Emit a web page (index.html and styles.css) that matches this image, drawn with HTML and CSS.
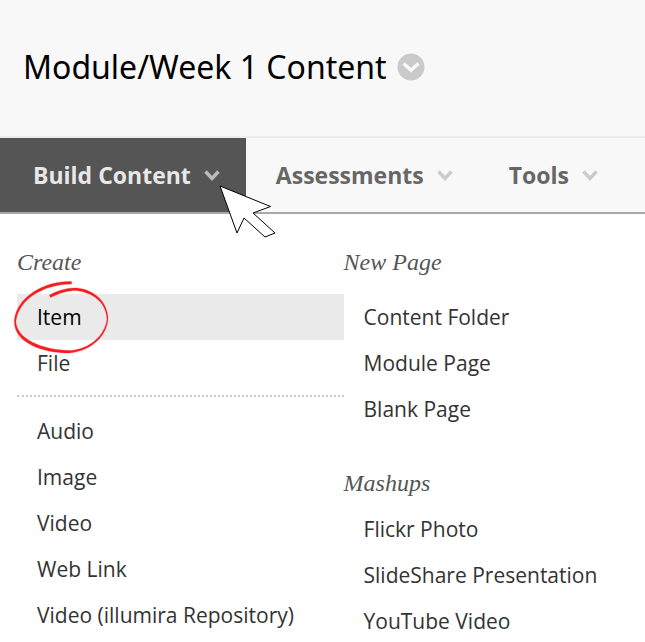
FILE: index.html
```html
<!DOCTYPE html>
<html lang="en">
<head>
  <meta charset="UTF-8">
  <meta name="viewport" content="width=device-width, initial-scale=1.0">
  <title>Module/Week 1 Content</title>
  <link rel="stylesheet" href="styles.css">
</head>
<body>
  <header class="page-header">
    <h1>Module/Week 1 Content</h1>
    <button type="button" class="title-menu" aria-label="Page options">
      <svg width="28" height="28" viewBox="0 0 28 28">
        <circle cx="14" cy="14" r="13.5" fill="#cacaca"/>
        <path d="M6.5 10.5l7.5 6.5 7.5-6.5" fill="none" stroke="#f8f8f8" stroke-width="3.6"/>
      </svg>
    </button>
  </header>

  <nav class="action-bar">
    <button type="button" class="tab active">Build Content
      <svg class="chevron" width="16" height="12" viewBox="0 0 16 12"><path d="M1.5 2.5l6.5 7 6.5-7"/></svg>
      <!-- mouse pointer -->
      <svg class="pointer" width="58" height="54" viewBox="0 0 58 54">
        <path d="M1 1l50.5 20.5L34 28l22 20-10 4-21-19-7 15z" fill="#fff" stroke="#000" stroke-width="1"/>
      </svg>
    </button>
    <button type="button" class="tab">Assessments
      <svg class="chevron" width="16" height="12" viewBox="0 0 16 12"><path d="M1.5 2.5l6.5 7 6.5-7"/></svg>
    </button>
    <button type="button" class="tab">Tools
      <svg class="chevron" width="16" height="12" viewBox="0 0 16 12"><path d="M1.5 2.5l6.5 7 6.5-7"/></svg>
    </button>
  </nav>

  <main class="menu">
    <div class="column">
      <h2>Create</h2>
      <ul>
        <li class="selected">
          <a href="#">Item</a>
          <!-- hand drawn circle -->
          <svg class="circle" width="96" height="74" viewBox="0 0 96 74">
            <path d="M57.500 .5C33-.5 4 14 .5 38C-2 61 28 72 55 72C78 70 94 54 94 36C92 17 76 7 60 7C52 7 43 10 35.500 14L36.500 16.500C47 11.500 54 9.500 62 9.500C79 11.500 92 21 93 38C91 55 75 68.500 56 69.500C28 69 2 58 2 40C5 18 29 3.500 57.500 3z" fill="#f81c1f" stroke="#f81c1f" stroke-width=".3"/>
          </svg>
        </li>
        <li><a href="#">File</a></li>
      </ul>
      <hr>
      <ul>
        <li><a href="#">Audio</a></li>
        <li><a href="#">Image</a></li>
        <li><a href="#">Video</a></li>
        <li><a href="#">Web Link</a></li>
        <li><a href="#">Video (illumira Repository)</a></li>
      </ul>
    </div>
    <div class="column">
      <h2>New Page</h2>
      <ul>
        <li><a href="#">Content Folder</a></li>
        <li><a href="#">Module Page</a></li>
        <li><a href="#">Blank Page</a></li>
      </ul>
      <h2 class="second">Mashups</h2>
      <ul>
        <li><a href="#">Flickr Photo</a></li>
        <li><a href="#">SlideShare Presentation</a></li>
        <li><a href="#">YouTube Video</a></li>
      </ul>
    </div>
  </main>
</body>
</html>
```
FILE: styles.css
```css
* {
  margin: 0;
  padding: 0;
  box-sizing: border-box;
}

body {
  font-family: "Open Sans", sans-serif;
  font-size: 21px;
  color: #333;
  background: #fff;
  overflow-x: hidden;
}

button {
  font: inherit;
  border: none;
  background: none;
  cursor: pointer;
}

.page-header {
  display: flex;
  align-items: center;
  gap: 10px;
  padding: 43px 23px 45px;
  background: #f8f8f8;
}

.page-header h1 {
  font-family: "Noto Sans", sans-serif;
  font-size: 32px;
  line-height: 48px;
  font-weight: 400;
  color: #000;
}

.title-menu,
.title-menu svg {
  display: block;
}

.action-bar {
  display: flex;
  background: #f8f8f8;
  border-top: 2px solid #ececec;
  border-bottom: 2px solid #a8a8a8;
}

.tab {
  position: relative;
  display: flex;
  align-items: center;
  gap: 13px;
  height: 74px;
  padding: 0 26px 0 30px;
  font-size: 23px;
  font-weight: 700;
  color: #666;
  white-space: nowrap;
}

.tab.active {
  padding-left: 33px;
  background: #555;
  color: #e8e8e8;
}

.chevron path {
  fill: none;
  stroke: #ccc;
  stroke-width: 3.4;
}

.tab.active .chevron path {
  stroke: #bbb;
}

.pointer {
  position: absolute;
  left: 219px;
  top: 47px;
  z-index: 1;
}

.menu {
  display: grid;
  grid-template-columns: 13fr 12fr;
  padding: 25px 0 0 17px;
}

.menu h2 {
  margin-bottom: 9px;
  font-family: "Liberation Serif", serif;
  font-size: 24px;
  line-height: 46px;
  font-weight: 400;
  font-style: italic;
  color: #555;
}

.menu h2.second {
  margin-top: 28px;
  margin-bottom: 0;
}

.menu ul {
  list-style: none;
}

.menu li {
  position: relative;
}

.menu a {
  display: block;
  padding-left: 20px;
  line-height: 46px;
  color: #333;
  text-decoration: none;
  white-space: nowrap;
}

.menu .selected {
  background: #eaeaea;
}

.menu .selected a {
  color: #000;
}

.circle {
  position: absolute;
  left: -3px;
  top: -13px;
  z-index: 1;
}

.menu hr {
  margin: 9px 0 11px;
  border: none;
  border-top: 2px dotted #ccc;
}
```
